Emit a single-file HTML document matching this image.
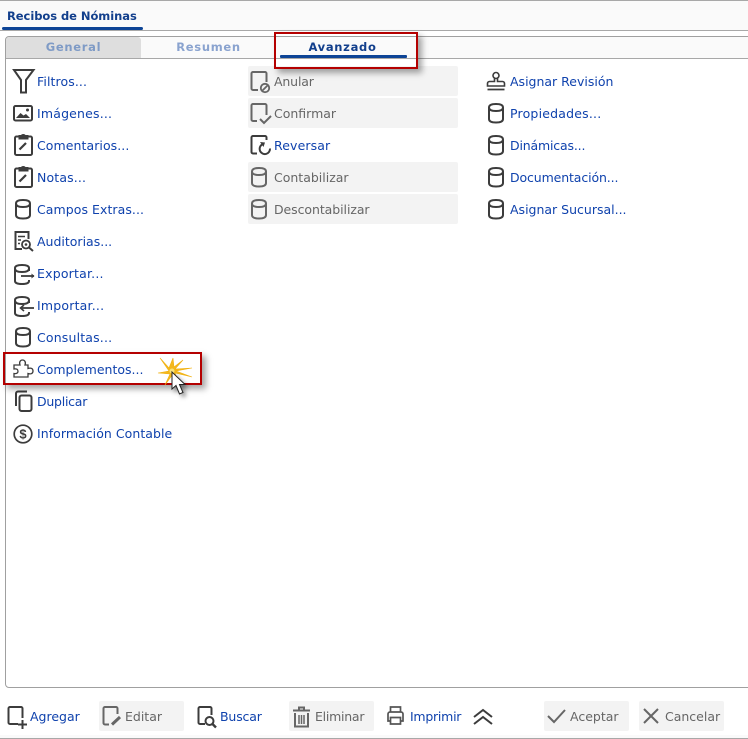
<!DOCTYPE html>
<html><head><meta charset="utf-8">
<style>
html,body{margin:0;padding:0;background:#fff}
#p{position:relative;width:748px;height:739px;overflow:hidden;background:#fff;font-family:"DejaVu Sans","Liberation Sans",sans-serif;font-size:12.5px;color:#0f42ad}
#p div,#p svg,#p span{position:absolute}
.t{white-space:nowrap;line-height:16px;height:16px}
.d{color:#666}
.g{background:#f3f3f3;border-radius:2px}
svg{overflow:visible;fill:none;stroke:#3c3c3c;stroke-width:2}
.tab{font-weight:bold;font-size:11.5px;letter-spacing:.7px;text-align:center;line-height:16px;white-space:nowrap}
.red{border:2px solid #b40000;box-sizing:border-box;box-shadow:4px 4px 6px rgba(0,0,0,.35)}
</style></head><body><div id="p">
<svg width="0" height="0" style="position:absolute">
<defs>
<g id="db"><path d="M2 5.500C2 3 5 2 9 2s7 1 7 3.500V17c0 2.500-3 3.500-7 3.500S2 19.500 2 17Z"/><path d="M2 5.500C2 8 5 9 9 9s7-1 7-3.500"/></g>
<g id="clip"><path d="M6 3.500H3.500a1.500 1.500 0 0 0-1.500 1.500V20.500a1.500 1.500 0 0 0 1.500 1.500H17.500a1.500 1.500 0 0 0 1.500-1.500V5a1.500 1.500 0 0 0-1.500-1.500H15"/><path d="M6.500 5.500V3H8.500a2 2 0 0 1 3.500 0H14.500V5.500Z" fill="#3c3c3c"/><path d="M6.500 16.500L13 10" stroke-width="2.200"/></g>
</defs></svg>

<!-- top chrome -->
<div style="left:0;top:0;width:748px;height:1px;background:#a8a8a8"></div>
<div style="left:0;top:1px;width:748px;height:29px;background:#fafafa"></div>
<div style="left:0;top:30px;width:748px;height:1px;background:#a8a8a8"></div>
<div style="left:2px;top:27px;width:141px;height:3px;background:#0d4496;border-radius:2px"></div>
<div class="t" style="left:7px;top:8px;font-weight:bold;font-size:11.500px;letter-spacing:-.05px;color:#123f8c">Recibos de Nóminas</div>

<!-- panel -->
<div style="left:5px;top:36px;width:760px;height:652px;box-sizing:border-box;border:1px solid #a0a0a0;border-radius:4px"></div>
<div style="left:6px;top:37px;width:135px;height:21px;background:#dedede;border-radius:3px 3px 0 0"></div>
<div style="left:141px;top:37px;width:607px;height:21px;background:#fafafa"></div>
<div style="left:6px;top:58px;width:742px;height:1px;background:#a8a8a8"></div>
<div class="tab" style="left:6px;top:39px;width:135px;color:#7f9bc6">General</div>
<div class="tab" style="left:141px;top:39px;width:135px;color:#8aa3cf">Resumen</div>
<div class="tab" style="left:275px;top:39px;width:135px;color:#123f8c">Avanzado</div>
<div style="left:280px;top:55px;width:127px;height:3px;background:#0d4496;border-radius:1px"></div>

<!-- grey backgrounds col 2 -->
<div class="g" style="left:248px;top:66px;width:210px;height:30px"></div>
<div class="g" style="left:248px;top:98px;width:210px;height:30px"></div>
<div class="g" style="left:248px;top:162px;width:210px;height:30px"></div>
<div class="g" style="left:248px;top:194px;width:210px;height:30px"></div>
<div class="red" style="left:274px;top:32px;width:144px;height:37px"></div>

<!-- column 1 -->
<svg style="left:13px;top:69px" width="22" height="24"><path d="M1 1H20.500L13 11V23.500H8V11Z"/></svg>
<div class="t" style="left:37px;top:74px;letter-spacing:.1px">Filtros...</div>
<svg style="left:13px;top:105px" width="20" height="17"><rect x="1" y="1" width="18" height="14.500" rx="1.500"/><path d="M3 13L7.500 8L10.500 10.500L13 9L17 13Z" fill="#3c3c3c" stroke="none"/><circle cx="14.500" cy="5" r="1.500" fill="#3c3c3c" stroke="none"/></svg>
<div class="t" style="left:37px;top:106px;letter-spacing:.18px">Imágenes...</div>
<svg style="left:13px;top:133px" width="20" height="26"><use href="#clip"/></svg>
<div class="t" style="left:37px;top:138px;letter-spacing:.07px">Comentarios...</div>
<svg style="left:13px;top:165px" width="20" height="26"><use href="#clip"/></svg>
<div class="t" style="left:37px;top:170px;letter-spacing:.14px">Notas...</div>
<svg style="left:14px;top:198px" width="20" height="24"><use href="#db"/></svg>
<div class="t" style="left:37px;top:202px;letter-spacing:.06px">Campos Extras...</div>
<svg style="left:13px;top:230px" width="22" height="23"><path d="M9 19H2.500V2H15.500V9"/><path d="M5 6.500H12M5 10H8M5 13.500H7" stroke-width="1.600"/><circle cx="13" cy="14.500" r="4" stroke-width="1.800"/><circle cx="13" cy="14.500" r="1.300" fill="#3c3c3c" stroke="none"/><path d="M16 17.500L20 21"/></svg>
<div class="t" style="left:37px;top:234px">Auditorias...</div>
<svg style="left:13px;top:263px" width="23" height="24"><path d="M16 8V5C16 3 13 2 9 2S2 3 2 5V18c0 2 3 3 7 3s7-1 7-3V17"/><path d="M2 5.500C2 8 5 9 9 9s7-1 7-3.500"/><path d="M8 13H21" stroke-width="1.800"/><path d="M18.500 10.500L21.500 13L18.500 15.500" fill="#3c3c3c" stroke="none"/></svg>
<div class="t" style="left:37px;top:266px;letter-spacing:.2px">Exportar...</div>
<svg style="left:13px;top:295px" width="23" height="24"><path d="M16 8V5C16 3 13 2 9 2S2 3 2 5V18c0 2 3 3 7 3s7-1 7-3V17"/><path d="M2 5.500C2 8 5 9 9 9s7-1 7-3.500"/><path d="M8 13H21" stroke-width="1.800"/><path d="M11 10L7.500 13L11 16" stroke-width="1.600"/></svg>
<div class="t" style="left:37px;top:298px;letter-spacing:.2px">Importar...</div>
<svg style="left:14px;top:326px" width="20" height="24"><use href="#db"/></svg>
<div class="t" style="left:37px;top:330px;letter-spacing:.17px">Consultas...</div>
<svg style="left:13px;top:359px" width="21" height="20"><path d="M1 6H7C6 3.500 7 1 9.500 1S13 3.500 12 6H15V9.500C18 8.500 20 9.500 20 12S18 15.500 15 14.500V18H1V14.500C3.500 15 5 14 5 12.200S3.500 9.500 1 10Z" stroke-width="1.300"/></svg>
<div class="t" style="left:37px;top:362px">Complementos...</div>
<svg style="left:14px;top:390px" width="20" height="22"><path d="M2 16V3.500A2 2 0 0 1 4 1.500H13"/><rect x="5.500" y="5.500" width="12" height="15.500" rx="2"/></svg>
<div class="t" style="left:37px;top:394px;letter-spacing:-.25px">Duplicar</div>
<svg style="left:13px;top:424px" width="20" height="20"><circle cx="10" cy="10" r="8.800" stroke-width="1.700"/><text x="10" y="14.500" text-anchor="middle" font-family="Liberation Sans" font-size="13" font-weight="bold" fill="#3c3c3c" stroke="none">$</text></svg>
<div class="t" style="left:37px;top:426px;letter-spacing:.05px">Información Contable</div>

<!-- complementos highlight -->
<div class="red" style="left:3px;top:352px;width:199px;height:33px"></div>
<svg style="left:158px;top:357px;stroke:#f0b010;stroke-width:.6" width="36" height="30"><polygon fill="#f4b81c" points="2,1 11,11 15,1 16,10 25,3 17,12 34,11 18,14 34,20 17,16 20,25 15,17 7,28 12,17 0,16 11,14"/><circle cx="14" cy="14" r="2.500" fill="#f8e27a" stroke="none"/></svg>
<svg style="left:171px;top:371px;stroke:#222;stroke-width:1;filter:drop-shadow(3px 3px 2px rgba(0,0,0,.4))" width="20" height="27"><path d="M1 1V18L5 14.500L8.500 23L12 21.500L8.500 13.500H14Z" fill="#fff"/></svg>

<!-- column 2 -->
<svg style="left:250px;top:71px" width="22" height="24"><path stroke="#666" d="M8 19H3a1.500 1.500 0 0 1-1.500-1.500V2.500A1.500 1.500 0 0 1 3 1H15a1.500 1.500 0 0 1 1.500 1.500V11"/><circle cx="15" cy="17" r="4.200" stroke="#666" stroke-width="1.800"/><path d="M12.500 19.500L17.500 14.500" stroke="#666" stroke-width="1.800"/></svg>
<div class="t d" style="left:274px;top:74px;letter-spacing:-.15px">Anular</div>
<svg style="left:250px;top:103px" width="24" height="24"><path stroke="#666" d="M7 18H3a1.500 1.500 0 0 1-1.500-1.500V2.500A1.500 1.500 0 0 1 3 1H15a1.500 1.500 0 0 1 1.500 1.500V12"/><path stroke="#666" d="M10 16L14 20L21 13"/></svg>
<div class="t d" style="left:274px;top:106px">Confirmar</div>
<svg style="left:250px;top:135px" width="24" height="24"><path d="M7 18.500H3a1.500 1.500 0 0 1-1.500-1.500V2.500A1.500 1.500 0 0 1 3 1H15a1.500 1.500 0 0 1 1.500 1.500V5"/><path d="M12 9.500A5.200 5.200 0 1 0 20 13.500"/><path d="M10 7L15 7.500L13.500 12" fill="#3c3c3c" stroke="none"/></svg>
<div class="t" style="left:274px;top:138px;letter-spacing:.12px">Reversar</div>
<svg style="left:250px;top:166px" width="20" height="24"><use href="#db" style="stroke:#666"/></svg>
<div class="t d" style="left:274px;top:170px">Contabilizar</div>
<svg style="left:250px;top:198px" width="20" height="24"><use href="#db" style="stroke:#666"/></svg>
<div class="t d" style="left:274px;top:202px;letter-spacing:-.07px">Descontabilizar</div>

<!-- column 3 -->
<svg style="left:486px;top:71px" width="20" height="21"><circle cx="10" cy="4.500" r="3" stroke-width="1.600"/><path d="M8.500 7.500V10.500H3.500A2 2 0 0 0 1.500 12.500V15H18.500V12.500A2 2 0 0 0 16.500 10.500H11.500V7.500" stroke-width="1.600"/><path d="M1.500 18.500H18.500" stroke-width="1.800"/></svg>
<div class="t" style="left:510px;top:74px">Asignar Revisión</div>
<svg style="left:487px;top:102px" width="20" height="24"><use href="#db"/></svg>
<div class="t" style="left:510px;top:106px;letter-spacing:.2px">Propiedades...</div>
<svg style="left:487px;top:134px" width="20" height="24"><use href="#db"/></svg>
<div class="t" style="left:510px;top:138px;letter-spacing:-.17px">Dinámicas...</div>
<svg style="left:487px;top:166px" width="20" height="24"><use href="#db"/></svg>
<div class="t" style="left:510px;top:170px;letter-spacing:-.12px">Documentación...</div>
<svg style="left:487px;top:198px" width="20" height="24"><use href="#db"/></svg>
<div class="t" style="left:510px;top:202px">Asignar Sucursal...</div>

<!-- footer chrome -->
<div style="left:0;top:735px;width:748px;height:3px;background:#fafafa"></div>
<div style="left:0;top:738px;width:748px;height:1px;background:#a8a8a8"></div>
<div class="g" style="left:99px;top:701px;width:85px;height:30px"></div>
<div class="g" style="left:289px;top:701px;width:85px;height:30px"></div>
<div class="g" style="left:544px;top:701px;width:85px;height:30px"></div>
<div class="g" style="left:639px;top:701px;width:85px;height:30px"></div>

<svg style="left:7px;top:706px" width="20" height="22"><path d="M11 18H3a1.500 1.500 0 0 1-1.500-1.500V2.500A1.500 1.500 0 0 1 3 1H14a1.500 1.500 0 0 1 1.500 1.500V12"/><path d="M11 18.500H20M15.500 14V23"/></svg>
<div class="t" style="left:30px;top:709px">Agregar</div>
<svg style="left:102px;top:706px" width="20" height="22"><path stroke="#666" d="M7 18.500H3a1.500 1.500 0 0 1-1.500-1.500V2.500A1.500 1.500 0 0 1 3 1H14a1.500 1.500 0 0 1 1.500 1.500V8"/><path stroke="#666" stroke-width="3" d="M10 18.500L18 11"/></svg>
<div class="t d" style="left:125px;top:709px">Editar</div>
<svg style="left:197px;top:706px" width="20" height="22"><path d="M8 18H3a1.500 1.500 0 0 1-1.500-1.500V2.500A1.500 1.500 0 0 1 3 1H13a1.500 1.500 0 0 1 1.500 1.500V9"/><circle cx="12.500" cy="15" r="4"/><path d="M15.500 18L19 21.500" stroke-width="2.400"/></svg>
<div class="t" style="left:220px;top:709px;letter-spacing:-.15px">Buscar</div>
<svg style="left:292px;top:706px" width="20" height="22"><path stroke="#666" d="M1 4.500H18M7 4V1.500H12V4M3 7V20.500H16V7"/><path stroke="#666" d="M7 9V18M9.500 9V18M12 9V18" stroke-width="1.500"/></svg>
<div class="t d" style="left:315px;top:709px;letter-spacing:-.25px">Eliminar</div>
<svg style="left:386px;top:706px" width="20" height="20"><path stroke="#555" stroke-width="1.700" d="M4.500 6V1H14.500V6M4.500 15H2V8A2 2 0 0 1 4 6H15A2 2 0 0 1 17 8V15H14.500"/><path stroke="#555" stroke-width="1.700" d="M4.500 11.500H14.500V18H4.500Z"/></svg>
<div class="t" style="left:410px;top:709px;letter-spacing:-.25px">Imprimir</div>
<svg style="left:473px;top:708px" width="20" height="18"><path stroke-width="2" d="M1 9L10 2L19 9M1 16L10 9L19 16"/></svg>
<svg style="left:547px;top:708px" width="20" height="16"><path stroke="#666" stroke-width="2" d="M1 8L7 14L18 2"/></svg>
<div class="t d" style="left:570px;top:709px">Aceptar</div>
<svg style="left:643px;top:708px" width="17" height="17"><path stroke="#666" stroke-width="2" d="M1 1L15 15M15 1L1 15"/></svg>
<div class="t d" style="left:665px;top:709px">Cancelar</div>
</div></body></html>
